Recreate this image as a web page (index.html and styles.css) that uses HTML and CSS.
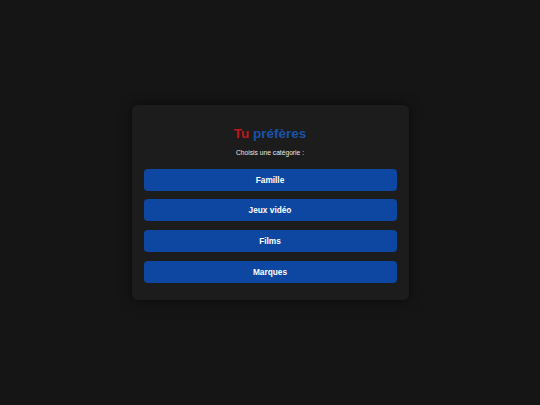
FILE: index.html
```html
<!DOCTYPE html>
<html lang="fr">
<head>
<meta charset="utf-8">
<title>Tu préfères</title>
<link rel="stylesheet" href="styles.css">
</head>
<body>
<main class="page">
  <section class="card">
    <h1 class="title"><span class="title-red">Tu</span> <span class="title-blue">préfères</span></h1>
    <p class="subtitle">Choisis une catégorie :</p>
    <div class="choices">
      <button class="choice">Famille</button>
      <button class="choice">Jeux vidéo</button>
      <button class="choice">Films</button>
      <button class="choice">Marques</button>
    </div>
  </section>
</main>
</body>
</html>
```
FILE: styles.css
```css
html, body {
  margin: 0;
  padding: 0;
  height: 100%;
}
body {
  background: #151515;
  font-family: "Liberation Sans", Arial, sans-serif;
  color: #ffffff;
}
.page {
  height: 100%;
  display: flex;
  align-items: center;
  justify-content: center;
}
.card {
  width: 277px;
  box-sizing: border-box;
  padding: 21px 12px 17px;
  background: #1c1c1c;
  border-radius: 6px;
  box-shadow: 0 0 12px rgba(0, 0, 0, 0.55);
  display: flex;
  flex-direction: column;
  align-items: stretch;
}
.title {
  margin: 0;
  font-size: 13.5px;
  line-height: 15px;
  font-weight: bold;
  text-align: center;
}
.title-red { color: #c0161e; }
.title-blue { color: #1a52a8; }
.subtitle {
  margin: 7.5px 0 0;
  font-size: 6.7px;
  line-height: 8px;
  text-align: center;
  color: #e8e8e8;
}
.choices {
  margin-top: 12px;
  display: flex;
  flex-direction: column;
  gap: 8.67px;
}
.choice {
  height: 22px;
  border: none;
  border-radius: 4px;
  background: #0d47a1;
  color: #ffffff;
  font-family: "Liberation Sans", Arial, sans-serif;
  font-size: 8.3px;
  font-weight: bold;
  padding: 0;
  cursor: pointer;
}
```
